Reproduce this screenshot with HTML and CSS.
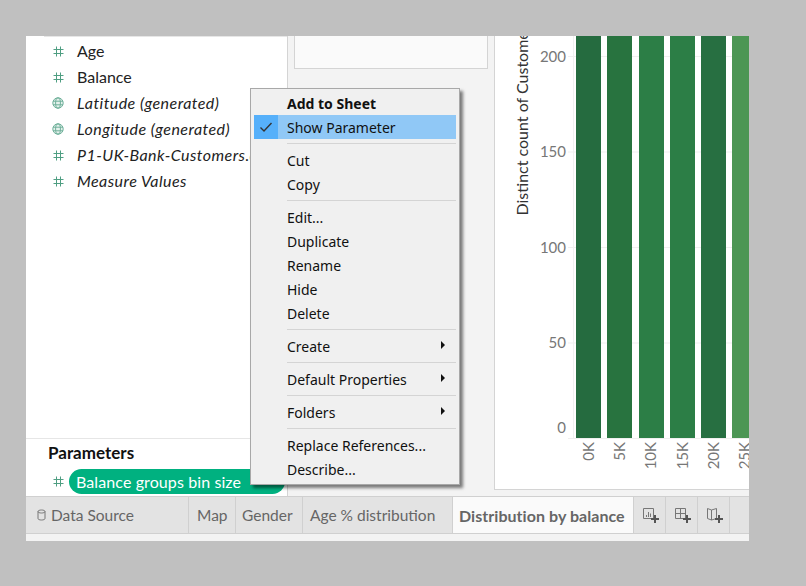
FILE: index.html
```html
<!DOCTYPE html>
<html lang="en">
<head>
  <meta charset="UTF-8">
  <title>Distribution by balance</title>
  <meta name="viewport" content="width=device-width, initial-scale=1.0">
  <link rel="stylesheet" href="styles.css">
</head>
<body>
  <svg class="defs" width="0" height="0">
    <symbol id="hash" viewBox="0 0 11 11">
      <path d="M3.5 0.5v10M7.5 0.5v10M0.5 3.5h10M0.5 7.5h10" fill="none" stroke="#4f9e82" stroke-width="1"/>
    </symbol>
    <symbol id="globe" viewBox="0 0 12 12">
      <circle cx="6" cy="6" r="5.2" fill="#e4f1ec" stroke="#6fb09a"/>
      <ellipse cx="6" cy="6" rx="2.4" ry="5.2" fill="none" stroke="#6fb09a"/>
      <path d="M1 4.2h10M1 7.8h10" fill="none" stroke="#6fb09a"/>
    </symbol>
  </svg>

  <div class="window">
    <div class="main">
      <div class="data-pane">
        <ul class="fields">
          <li><svg class="ico"><use href="#hash"/></svg>Age</li>
          <li><svg class="ico"><use href="#hash"/></svg>Balance</li>
          <li class="gen"><svg class="ico ico-globe"><use href="#globe"/></svg>Latitude (generated)</li>
          <li class="gen"><svg class="ico ico-globe"><use href="#globe"/></svg>Longitude (generated)</li>
          <li class="gen"><svg class="ico"><use href="#hash"/></svg>P1-UK-Bank-Customers.csv</li>
          <li class="gen"><svg class="ico"><use href="#hash"/></svg>Measure Values</li>
        </ul>
        <div class="params">
          <h3>Parameters</h3>
          <div class="param-row">
            <svg class="ico"><use href="#hash"/></svg>
            <span class="pill">Balance groups bin size</span>
          </div>
        </div>
      </div>

      <div class="shelf-pane">
        <div class="shelf-card"></div>
      </div>

      <div class="chart">
        <div class="y-title"><span>Distinct count of Customer ID</span></div>
        <div class="y-ticks">
          <span>200</span>
          <span>150</span>
          <span>100</span>
          <span>50</span>
          <span class="zero">0</span>
        </div>
        <div class="plot-col">
          <div class="plot">
            <div class="bar c1"></div>
            <div class="bar c2"></div>
            <div class="bar c3"></div>
            <div class="bar c3"></div>
            <div class="bar c4"></div>
            <div class="bar c5"></div>
          </div>
          <div class="x-labels">
            <div><span>0K</span></div>
            <div><span>5K</span></div>
            <div><span>10K</span></div>
            <div><span>15K</span></div>
            <div><span>20K</span></div>
            <div><span>25K</span></div>
          </div>
        </div>
      </div>
    </div>

    <div class="tabs">
      <div class="tab tab-source">
        <svg class="db" viewBox="0 0 9 12" width="9" height="12">
          <path d="M1 2.5v7c0 2 7 2 7 0v-7c0-2-7-2-7 0c0 2 7 2 7 0" fill="none" stroke="#777"/>
        </svg>
        Data Source
      </div>
      <div class="tab tab-map">Map</div>
      <div class="tab tab-gender">Gender</div>
      <div class="tab tab-age">Age % distribution</div>
      <div class="tab tab-active">Distribution by balance</div>
      <div class="tab tab-icon">
        <svg viewBox="0 0 16 16" width="16" height="16">
          <path d="M0.5 1.5h10v10h-10z" fill="none" stroke="#777"/>
          <path d="M3.5 8v2M5.5 5v5M7.5 6.5v3.5" fill="none" stroke="#777"/>
          <path d="M12 8v8M8 12h8" fill="none" stroke="#555" stroke-width="2"/>
        </svg>
      </div>
      <div class="tab tab-icon">
        <svg viewBox="0 0 16 16" width="16" height="16">
          <path d="M0.5 1.5h10v10h-10zM5.5 1.5v10M0.5 6.5h10" fill="none" stroke="#777"/>
          <path d="M12 8v8M8 12h8" fill="none" stroke="#555" stroke-width="2"/>
        </svg>
      </div>
      <div class="tab tab-icon">
        <svg viewBox="0 0 16 16" width="16" height="16">
          <path d="M0.5 1.5l4 1.5l5-1.5v10l-5 1.5l-4-1.5zM4.5 3v10" fill="none" stroke="#777"/>
          <path d="M12 8v8M8 12h8" fill="none" stroke="#555" stroke-width="2"/>
        </svg>
      </div>
    </div>
    <div class="status"></div>
  </div>

  <div class="menu">
    <div class="item bold">Add to Sheet</div>
    <div class="item checked">
      <span class="check">
        <svg viewBox="0 0 14 12" width="14" height="12">
          <path d="M1.5 6.5l3.5 3.5l7.5-8" fill="none" stroke="#333" stroke-width="1.4"/>
        </svg>
      </span>
      Show Parameter
    </div>
    <div class="sep"></div>
    <div class="item">Cut</div>
    <div class="item">Copy</div>
    <div class="sep"></div>
    <div class="item">Edit...</div>
    <div class="item">Duplicate</div>
    <div class="item">Rename</div>
    <div class="item">Hide</div>
    <div class="item">Delete</div>
    <div class="sep"></div>
    <div class="item sub">Create</div>
    <div class="sep"></div>
    <div class="item sub">Default Properties</div>
    <div class="sep"></div>
    <div class="item sub">Folders</div>
    <div class="sep"></div>
    <div class="item">Replace References...</div>
    <div class="item">Describe...</div>
  </div>
</body>
</html>
```

FILE: styles.css
```css
body {
  margin: 0;
  height: 586px;
  background: #c0c0c0;
  font-family: Lato, sans-serif;
  overflow: hidden;
}
.defs {
  position: absolute;
}
.window {
  position: absolute;
  left: 26px;
  top: 36px;
  width: 723px;
  height: 505px;
  background: #f3f3f3;
  display: flex;
  flex-direction: column;
  overflow: hidden;
}
.main {
  display: flex;
  height: 460px;
  flex: none;
}

/* data pane */
.data-pane {
  width: 261px;
  background: white;
  border-right: 1px solid #d4d4d4;
  box-sizing: content-box;
  display: flex;
  flex-direction: column;
}
.fields {
  flex: 1;
  list-style: none;
  margin: 0 0 0 18px;
  padding: 1px 0 0;
  border-top: 1px solid #e6e6e6;
}
.fields li {
  height: 26px;
  line-height: 26px;
  font-size: 16px;
  color: #222;
  white-space: nowrap;
  display: flex;
  align-items: center;
}
.fields .gen {
  font-style: italic;
  letter-spacing: 0.45px;
}
.ico {
  width: 11px;
  height: 11px;
  margin-left: 9px;
  margin-right: 13px;
  flex: none;
}
.ico-globe {
  width: 12px;
  height: 12px;
  margin-left: 8px;
}
.params {
  height: 58px;
  border-top: 1px solid #e6e6e6;
  box-sizing: border-box;
}
.params h3 {
  margin: 3px 0 0 22px;
  font-size: 17px;
  line-height: 22px;
  font-weight: bold;
  color: #111;
}
.param-row {
  display: flex;
  align-items: center;
  margin: 5px 0 0 27px;
}
.param-row .ico {
  margin: 0 5px 0 0;
}
.pill {
  width: 216px;
  height: 25px;
  line-height: 25px;
  border-radius: 13px;
  background: #00b180;
  color: white;
  font-size: 16px;
  letter-spacing: 0.1px;
  padding-left: 7px;
  box-sizing: border-box;
  flex: none;
}

/* middle */
.shelf-pane {
  width: 206px;
  padding-left: 6px;
  box-sizing: border-box;
  flex: none;
}
.shelf-card {
  width: 194px;
  height: 33px;
  box-sizing: border-box;
  background: #fafafa;
  border-left: 1px solid #d4d4d4;
  border-right: 1px solid #d4d4d4;
  border-bottom: 1px solid #d4d4d4;
}

/* chart */
.chart {
  width: 255px;
  height: 454px;
  flex: none;
  box-sizing: border-box;
  background: white;
  border-left: 1px solid #d4d4d4;
  border-bottom: 1px solid #d4d4d4;
  display: flex;
  overflow: hidden;
}
.y-title {
  width: 36px;
  flex: none;
  height: 179px;
  display: flex;
  flex-direction: column;
  justify-content: flex-end;
  align-items: center;
  font-size: 16px;
  color: #333;
  padding-left: 16px;
  box-sizing: border-box;
}
.y-title span {
  writing-mode: vertical-rl;
  transform: rotate(180deg);
  white-space: nowrap;
  flex: none;
}
.y-ticks {
  width: 35px;
  flex: none;
  padding-top: 9.6px;
  text-align: right;
  font-size: 15px;
  color: #777;
}
.y-ticks span {
  display: block;
  height: 95.5px;
  line-height: 20px;
}
.y-ticks .zero {
  margin-top: -11px;
}
.plot-col {
  flex: none;
  width: 182px;
  margin-left: 2px;
}
.plot {
  height: 402px;
  box-sizing: border-box;
  padding-left: 8px;
  display: flex;
  gap: 6.3px;
  background-image: linear-gradient(#f0f0f0, #f0f0f0), linear-gradient(#efefef 1px, transparent 1px);
  background-size: 1px 100%, 100% 95.5px;
  background-position: 5px 0, 0 20px;
  background-repeat: no-repeat, repeat;
}
.bar {
  width: 25px;
  flex: none;
}
.c1 { background: #256b3f; }
.c2 { background: #28733f; }
.c3 { background: #2c7e46; }
.c4 { background: #276f41; }
.c5 { background: #4c9654; }
.x-labels {
  display: flex;
  padding-left: 4px;
  border-top: 1px solid #efefef;
  font-size: 15px;
  color: #777;
}
.x-labels div {
  width: 31.3px;
  flex: none;
  display: flex;
  justify-content: center;
  align-items: flex-start;
  padding-top: 3px;
}
.x-labels span {
  writing-mode: vertical-rl;
  transform: rotate(180deg);
  white-space: nowrap;
}

/* tabs */
.tabs {
  display: flex;
  height: 38px;
  flex: none;
  background: #e3e3e3;
  border-top: 1px solid #d0d0d0;
  border-bottom: 1px solid #d0d0d0;
  box-sizing: border-box;
  font-size: 15.5px;
  color: #666;
}
.tab {
  height: 100%;
  box-sizing: border-box;
  border-right: 1px solid #d0d0d0;
  display: flex;
  align-items: center;
  white-space: nowrap;
  flex: none;
}
.tab-source {
  width: 163px;
  padding-left: 11px;
}
.db {
  margin-right: 5px;
}
.tab-map { width: 47px; padding-left: 8px; }
.tab-gender { width: 67px; padding-left: 6px; }
.tab-age { width: 150px; padding-left: 7px; }
.tab-active {
  width: 181px;
  padding-left: 6px;
  background: #fafafa;
  font-size: 16px;
  font-weight: bold;
  letter-spacing: 0.05px;
}
.tab-icon {
  width: 32px;
  padding-left: 9px;
}

/* context menu */
.menu {
  position: absolute;
  left: 250px;
  top: 88px;
  width: 210px;
  height: 397px;
  box-sizing: border-box;
  padding: 2px 3px;
  background: #f0f0f0;
  border: 1px solid #a8a8a8;
  box-shadow: 3px 3px 3px rgba(0,0,0,0.5);
  font-family: "Noto Sans", sans-serif;
  font-size: 14px;
  color: #111;
}
.item {
  position: relative;
  height: 24px;
  line-height: 25px;
  padding-left: 33px;
  white-space: nowrap;
}
.bold {
  font-weight: bold;
}
.checked {
  background: #90c8f6;
}
.check {
  position: absolute;
  left: 0;
  top: 0;
  width: 24px;
  height: 24px;
  background: #56b0fa;
  display: flex;
  align-items: center;
  justify-content: center;
}
.sub::after {
  content: "";
  position: absolute;
  right: 11px;
  top: 7px;
  border-left: 4px solid #111;
  border-top: 4px solid transparent;
  border-bottom: 4px solid transparent;
}
.sep {
  height: 1px;
  margin: 4px 0 4px 33px;
  background: #d4d4d4;
}
```
